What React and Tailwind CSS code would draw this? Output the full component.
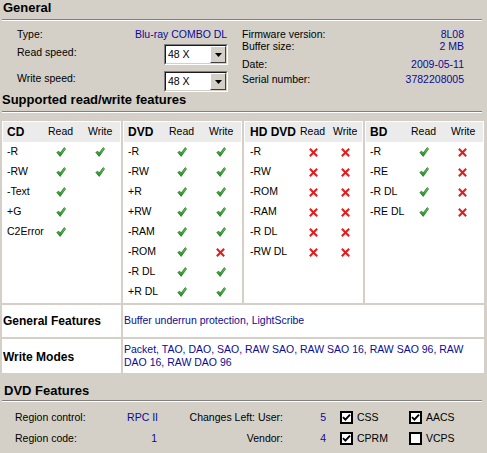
import React from "react";

const BLUE = "text-[#0b0b94]";

function Check() {
  return (
    <svg width="10" height="10" viewBox="0 0 10 10" className="block">
      <defs>
        <linearGradient id="gch" x1="0" y1="0" x2="0" y2="1">
          <stop offset="0" stopColor="#6fd35f" />
          <stop offset="1" stopColor="#1f8a1f" />
        </linearGradient>
      </defs>
      <polygon points="0.8,5.4 2.8,4.2 4,6.2 8.2,0.6 9.6,1.8 4.2,9.4" fill="url(#gch)" stroke="#17701a" strokeWidth="0.7" strokeLinejoin="round" />
    </svg>
  );
}

function Cross() {
  return (
    <svg width="9" height="9" viewBox="0 0 9 9" className="block">
      <g stroke="#e31c1c" strokeWidth="2.1" strokeLinecap="square">
        <line x1="1.6" y1="1.6" x2="7.4" y2="7.4" />
        <line x1="7.4" y1="1.6" x2="1.6" y2="7.4" />
      </g>
    </svg>
  );
}

function Mark({ v }) {
  if (v === 1) return <Check />;
  if (v === 0) return <Cross />;
  return null;
}

function Panel({ title, rows, hd }) {
  const gridCls = hd ? "grid grid-cols-[50px_33px_1fr] items-center" : "grid grid-cols-[41px_40px_1fr] items-center";
  const padCls = hd ? "pl-[5px]" : "pl-[4px]";
  const readBox = hd ? "w-[26px] flex justify-center" : "w-[25px] flex justify-center";
  const writeBox = hd ? "w-[24px] flex justify-center" : "w-[23px] flex justify-center";
  return (
    <div className="w-[119px] bg-white">
      <div className={`mx-[1px] mt-[1px] h-[20px] bg-[#ebebeb] ${padCls} ${gridCls}`}>
        <span className="font-bold text-[12px] whitespace-nowrap">{title}</span>
        <span>Read</span>
        <span>Write</span>
      </div>
      {rows.map((r, i) => (
        <div key={i} className={`mx-[1px] h-[20px] ${padCls} ${gridCls}`}>
          <span className="whitespace-nowrap">{r[0]}</span>
          <div className={readBox}><Mark v={r[1]} /></div>
          <div className={writeBox}><Mark v={r[2]} /></div>
        </div>
      ))}
    </div>
  );
}

function Combo({ value }) {
  return (
    <div className="w-[64px] h-[21px] flex border border-t-[#808080] border-l-[#808080] border-b-white border-r-white">
      <div className="flex-1 flex border border-t-[#1a1a1a] border-l-[#1a1a1a] border-b-[#d4d0c8] border-r-[#d4d0c8] bg-white">
        <div className="flex-1 pl-[2px] leading-[17px]">{value}</div>
        <div className="w-[16px] h-[17px] bg-[#d4d0c8] border border-t-white border-l-white border-b-[#404040] border-r-[#404040] flex items-center justify-center">
          <svg width="7" height="4" viewBox="0 0 7 4" className="block">
            <polygon points="0,0 7,0 3.5,4" fill="#000" />
          </svg>
        </div>
      </div>
    </div>
  );
}

function Sep({ className }) {
  return <div className={`ml-[2px] w-[480px] h-[2px] border-t border-t-[#808080] border-b border-b-white ${className}`} />;
}

function CheckBox({ checked, label }) {
  return (
    <div className="flex items-center">
      <div className="w-[13px] h-[13px] border-2 border-black bg-white flex items-center justify-center">
        {checked && (
          <svg width="9" height="9" viewBox="0 0 9 9" className="block">
            <polyline points="1,4.2 3.4,6.6 8,1.6" fill="none" stroke="#000" strokeWidth="1.9" />
          </svg>
        )}
      </div>
      <span className="ml-[4px]">{label}</span>
    </div>
  );
}

export default function App() {
  const cd = [["-R", 1, 1], ["-RW", 1, 1], ["-Text", 1, null], ["+G", 1, null], ["C2Error", 1, null]];
  const dvd = [["-R", 1, 1], ["-RW", 1, 1], ["+R", 1, 1], ["+RW", 1, 1], ["-RAM", 1, 1], ["-ROM", 1, 0], ["-R DL", 1, 1], ["+R DL", 1, 1]];
  const hd = [["-R", 0, 0], ["-RW", 0, 0], ["-ROM", 0, 0], ["-RAM", 0, 0], ["-R DL", 0, 0], ["-RW DL", 0, 0]];
  const bd = [["-R", 1, 0], ["-RE", 1, 0], ["-R DL", 1, 0], ["-RE DL", 1, 0]];

  return (
    <div className="relative w-[487px] h-[453px] overflow-hidden bg-[#d4d0c8] text-black font-['Liberation_Sans',Arial,sans-serif] text-[10.5px]">
      {/* General */}
      <div className="h-[16px] pl-[3px] font-bold text-[13px] leading-[16px]">General</div>
      <Sep className="mt-[3px]" />
      <div className="h-[71px] flex">
        <div className="w-[242px] pl-[17px]">
          <div className="pt-[6px] flex h-[20px] leading-[14px]">
            <span className="w-[118px]">Type:</span>
            <span className={BLUE}>Blu-ray COMBO DL</span>
          </div>
          <div className="mt-[3px] flex">
            <span className="w-[147px] mt-[1px] leading-[14px]">Read speed:</span>
            <Combo value="48 X" />
          </div>
          <div className="mt-[6px] flex">
            <span className="w-[147px] leading-[14px]">Write speed:</span>
            <Combo value="48 X" />
          </div>
        </div>
        <div className="w-[222px] pt-[7px] leading-[12px]">
          <div className="flex justify-between"><span>Firmware version:</span><span className={BLUE}>8L08</span></div>
          <div className="flex justify-between"><span>Buffer size:</span><span className={BLUE}>2 MB</span></div>
          <div className="mt-[6px] flex justify-between"><span>Date:</span><span className={BLUE}>2009-05-11</span></div>
          <div className="mt-[3px] flex justify-between"><span>Serial number:</span><span className={BLUE}>3782208005</span></div>
        </div>
      </div>

      {/* Supported features */}
      <div className="h-[16px] pl-[2px] font-bold text-[13px] leading-[16px]">Supported read/write features</div>
      <Sep className="mt-[3px]" />
      <div className="mt-[8px] ml-[2px] w-[482px] flex flex-col gap-[2px]">
        <div className="h-[182px] flex gap-[2px]">
          <Panel title="CD" rows={cd} />
          <Panel title="DVD" rows={dvd} />
          <Panel title="HD DVD" rows={hd} hd />
          <Panel title="BD" rows={bd} />
        </div>
        <div className="h-[32px] flex gap-[2px]">
          <div className="w-[119px] bg-white pl-[1px] flex items-center font-bold text-[12px]">General Features</div>
          <div className={`flex-1 bg-white pl-[1px] flex items-center ${BLUE}`}>Buffer underrun protection, LightScribe</div>
        </div>
        <div className="h-[34px] flex gap-[2px]">
          <div className="w-[119px] bg-white pl-[1px] pt-[1px] flex items-center font-bold text-[12px]">Write Modes</div>
          <div className={`flex-1 bg-white pl-[1px] pt-[4px] leading-[13px] ${BLUE}`}>
            <div className="whitespace-nowrap">Packet, TAO, DAO, SAO, RAW SAO, RAW SAO 16, RAW SAO 96, RAW</div>
            <div className="whitespace-nowrap">DAO 16, RAW DAO 96</div>
          </div>
        </div>
      </div>

      {/* DVD Features */}
      <div className="mt-[10px] h-[16px] pl-[4px] font-bold text-[13px] leading-[16px]">DVD Features</div>
      <Sep className="mt-[1px]" />
      <div className="mt-[8px] pl-[15px] flex h-[14px] leading-[14px] items-center">
        <div className="w-[143px] flex justify-between"><span>Region control:</span><span className={BLUE}>RPC II</span></div>
        <span className="w-[125px] text-right">Changes Left: User:</span>
        <span className={`w-[43px] text-right ${BLUE}`}>5</span>
        <div className="ml-[14px] w-[69px]"><CheckBox checked label="CSS" /></div>
        <CheckBox checked label="AACS" />
      </div>
      <div className="mt-[7px] pl-[15px] flex h-[14px] leading-[14px] items-center">
        <div className="w-[143px] flex justify-between"><span>Region code:</span><span className={`pr-[1px] ${BLUE}`}>1</span></div>
        <span className="w-[125px] text-right">Vendor:</span>
        <span className={`w-[43px] text-right ${BLUE}`}>4</span>
        <div className="ml-[14px] w-[69px]"><CheckBox checked label="CPRM" /></div>
        <CheckBox checked={false} label="VCPS" />
      </div>
    </div>
  );
}
